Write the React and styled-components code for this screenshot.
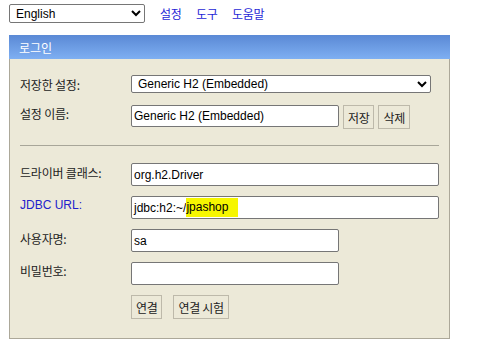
import React from "react";
import styled, { createGlobalStyle } from "styled-components";

const Global = createGlobalStyle`
  html, body { margin: 0; padding: 0; background: #fff; }
  body {
    font-family: "Liberation Sans", Arial, "Noto Sans CJK KR", sans-serif;
    font-size: 12px;
    color: #000;
  }
`;

const Page = styled.div`
  width: 499px;
  height: 361px;
  padding: 4px 0 0 9px;
  box-sizing: border-box;
`;

const TopBar = styled.div`
  display: flex;
  align-items: center;
  height: 19px;
`;

const LangSelect = styled.select`
  width: 136px;
  height: 19px;
  font: 12px "Liberation Sans", Arial, sans-serif;
  margin: 0 15px 0 0;
  padding: 0 0 0 2px;
  border: 1px solid #767676;
  border-radius: 2px;
  background: #fff;
  color: #000;
`;

const Links = styled.div`
  display: flex;
`;

const NavLink = styled.a`
  display: inline-block;
  width: ${(p) => (p.$w ? `${p.$w}px` : "auto")};
  color: #1f1fd6;
  text-decoration: none;
  font-family: "Noto Sans CJK KR", sans-serif;
  font-size: 12px;
  letter-spacing: -0.3px;
`;

const Panel = styled.div`
  margin-top: 12px;
  width: 441px;
  height: 304px;
  box-sizing: border-box;
  background: #ece9d8;
  border: 1px solid #aca899;
  border-top: none;
`;

const PanelHeader = styled.div`
  height: 24px;
  display: flex;
  align-items: center;
  padding-left: 10px;
  background: linear-gradient(#5a89d5, #7eaff2);
  color: #fff;
  font-family: "Noto Sans CJK KR", sans-serif;
  font-size: 12px;
  margin: 0 -1px;
`;

const Body = styled.div`
  padding: 16px 10px 0 10px;
`;

const Section = styled.div`
  display: grid;
  grid-template-columns: 111px auto;
  row-gap: ${(p) => p.$gap}px;
  align-items: start;
`;

const Label = styled.div`
  font-family: "Noto Sans CJK KR", sans-serif;
  font-size: 12px;
  letter-spacing: -0.2px;
  padding-top: ${(p) => p.$pt || 3}px;
  color: ${(p) => (p.$blue ? "#2222cc" : "#222")};
  white-space: nowrap;
  line-height: 14px;
  ${(p) => p.$latin && `font-family: "Liberation Sans", Arial, sans-serif; letter-spacing: 0;`}
`;

const Field = styled.div`
  display: flex;
  align-items: flex-start;
  gap: 4px;
`;

const BigSelect = styled.select`
  width: 300px;
  height: 18px;
  font: 12px "Liberation Sans", Arial, sans-serif;
  padding: 0 0 0 2px;
  margin: 0;
  border: 1px solid #767676;
  border-radius: 2px;
  background: #fff;
  color: #000;
`;

const TextInput = styled.input`
  width: ${(p) => p.$w}px;
  height: ${(p) => p.$h || 22}px;
  box-sizing: border-box;
  font: 12px "Liberation Sans", Arial, sans-serif;
  padding: 1px 2px;
  margin: 0;
  border: 1px solid #767676;
  border-radius: 2px;
  background: #fff;
  color: #000;
`;

const FakeInput = styled.div`
  width: ${(p) => p.$w}px;
  height: ${(p) => p.$h || 22}px;
  box-sizing: border-box;
  font: 12px "Liberation Sans", Arial, sans-serif;
  padding: 0 2px;
  border: 1px solid #767676;
  border-radius: 2px;
  background: #fff;
  display: flex;
  align-items: center;
`;

const Highlight = styled.span`
  background: #f6f600;
  padding: 2px 10px 3px 0;
`;

const Button = styled.button`
  height: 24px;
  box-sizing: border-box;
  padding: 0 4px;
  margin: 0;
  font-family: "Noto Sans CJK KR", sans-serif;
  font-size: 12px;
  color: #222;
  background: #ece9d8;
  border: 1px solid #bdb9aa;
  border-radius: 0;
  letter-spacing: -0.3px;
`;

const Divider = styled.div`
  height: 0;
  border-top: 1px solid #a8a699;
  margin: 16px 0 17px 0;
`;

const ButtonRow = styled.div`
  display: flex;
  gap: 11px;
`;

export default function App() {
  return (
    <>
      <Global />
      <Page>
        <TopBar>
          <LangSelect defaultValue="en">
            <option value="en">English</option>
          </LangSelect>
          <Links>
            <NavLink href="#" $w={36}>설정</NavLink>
            <NavLink href="#" $w={36}>도구</NavLink>
            <NavLink href="#">도움말</NavLink>
          </Links>
        </TopBar>
        <Panel>
          <PanelHeader>로그인</PanelHeader>
          <Body>
            <Section $gap={12}>
              <Label $pt={0}>저장한 설정:</Label>
              <Field>
                <BigSelect defaultValue="g">
                  <option value="g">Generic H2 (Embedded)</option>
                </BigSelect>
              </Field>
              <Label $pt={2}>설정 이름:</Label>
              <Field>
                <TextInput $w={208} defaultValue="Generic H2 (Embedded)" />
                <Button>저장</Button>
                <Button>삭제</Button>
              </Field>
            </Section>
            <Divider />
            <Section $gap={10}>
              <Label $pt={3}>드라이버 클래스:</Label>
              <Field>
                <TextInput $w={308} $h={23} defaultValue="org.h2.Driver" />
              </Field>
              <Label $pt={2} $blue $latin>JDBC URL:</Label>
              <Field>
                <FakeInput $w={308} $h={23}>
                  jdbc:h2:~/<Highlight>jpashop</Highlight>
                </FakeInput>
              </Field>
              <Label $pt={3}>사용자명:</Label>
              <Field>
                <TextInput $w={208} $h={23} defaultValue="sa" />
              </Field>
              <Label $pt={2}>비밀번호:</Label>
              <Field>
                <TextInput $w={208} $h={23} type="password" defaultValue="" />
              </Field>
              <div />
              <ButtonRow>
                <Button>연결</Button>
                <Button>연결 시험</Button>
              </ButtonRow>
            </Section>
          </Body>
        </Panel>
      </Page>
    </>
  );
}
